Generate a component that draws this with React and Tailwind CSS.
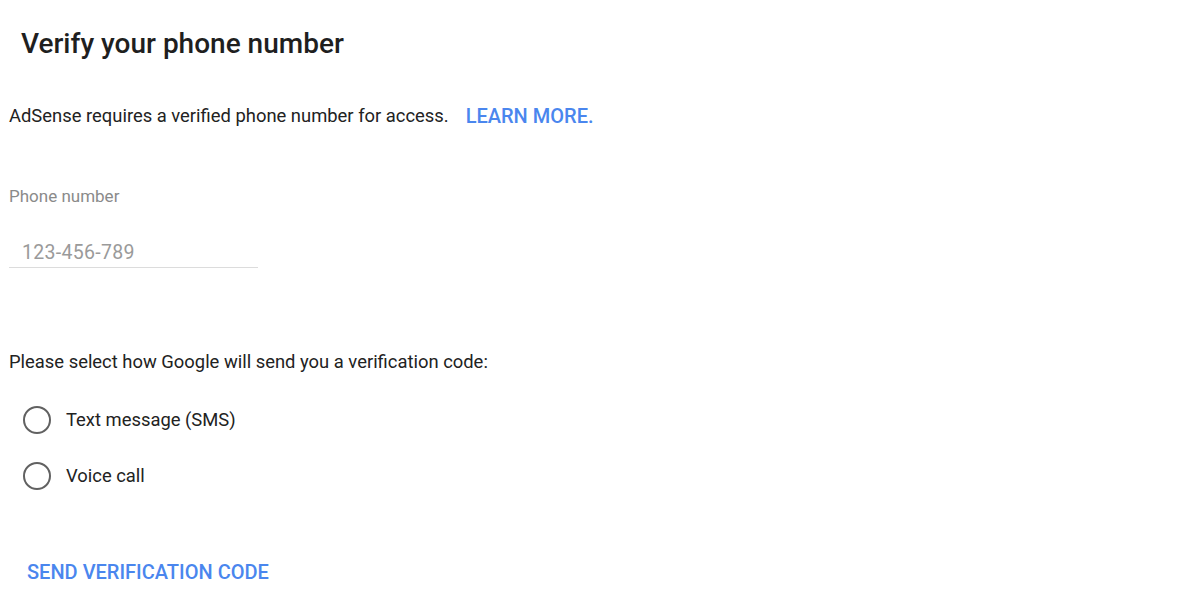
import React, { useState } from "react";

const Radio = ({ label, checked, onChange }) => (
  <label className="flex items-center gap-[15px] cursor-pointer h-[28px]">
    <span className="w-[28px] h-[28px] rounded-full border-2 border-[#616161] flex items-center justify-center">
      {checked && <span className="w-[14px] h-[14px] rounded-full bg-[#4285f4]" />}
    </span>
    <input type="radio" className="hidden" checked={checked} onChange={onChange} />
    <span className="text-[18.4px] text-[#222]">{label}</span>
  </label>
);

export default function App() {
  const [method, setMethod] = useState("");

  return (
    <div className="w-[1200px] h-[606px] bg-white font-['Roboto',_'Liberation_Sans',_sans-serif] text-[#222]">
      {/* title */}
      <h1 className="pl-[21px] pt-[28px] text-[28px] font-medium leading-[32px] text-[#1f1f1f]">
        Verify your phone number
      </h1>

      {/* intro */}
      <div className="pl-[9px] pt-[44px] flex items-center text-[18.4px] leading-[24px]">
        <span>AdSense requires a verified phone number for access.</span>
        <a href="#" className="ml-[17px] text-[20px] font-medium text-[#4a86ee]">
          LEARN MORE.
        </a>
      </div>

      {/* phone field */}
      <div className="pl-[9px] pt-[57px] w-[258px]">
        <div className="text-[17px] leading-[22px] text-[#8a8a8a]">Phone number</div>
        <input
          type="text"
          placeholder="123-456-789"
          className="mt-[34px] w-[249px] pl-[13px] pb-[2px] text-[19.5px] leading-[24px] tracking-[0.3px] border-b border-[#dcdcdc] outline-none placeholder:text-[#9a9a9a]"
        />
      </div>

      {/* method */}
      <div className="pl-[9px] pt-[82px] text-[18.4px] leading-[24px]">
        Please select how Google will send you a verification code:
      </div>
      <div className="pl-[23px] pt-[32px] flex flex-col gap-[28px]">
        <Radio label="Text message (SMS)" checked={method === "sms"} onChange={() => setMethod("sms")} />
        <Radio label="Voice call" checked={method === "voice"} onChange={() => setMethod("voice")} />
      </div>

      {/* action */}
      <div className="pl-[27px] pt-[70px]">
        <button className="text-[20px] font-medium text-[#4a86ee] leading-[24px]">
          SEND VERIFICATION CODE
        </button>
      </div>
    </div>
  );
}
